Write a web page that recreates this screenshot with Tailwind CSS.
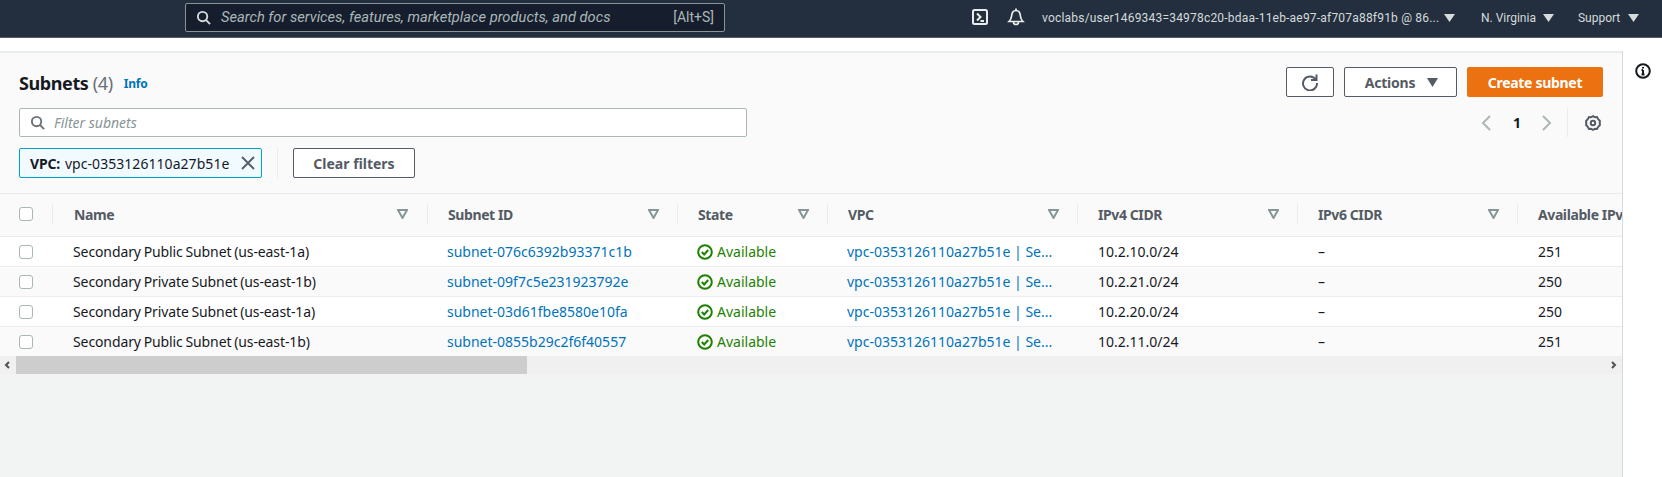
<!DOCTYPE html>
<html lang="en">
<head>
<meta charset="utf-8">
<title>Subnets</title>
<script src="https://cdn.jsdelivr.net/npm/@tailwindcss/browser@4"></script>
</head>
<body class="bg-white">
<div class="h-[477px] w-[1662px] overflow-hidden flex flex-col bg-white font-['Noto_Sans',sans-serif] text-[14px] text-[#16191f]">

	<!-- top nav -->
	<div class="h-[38px] shrink-0 bg-[#232f3e] border-b border-[#545b64] flex items-start font-['Roboto',sans-serif] text-[12px] text-[#d5dbdb]">
		<div class="ml-[185px] mt-[3px] w-[540px] h-[29px] bg-[#161e2d] border border-[#879596] rounded-[2px] flex items-center pl-[10px] pr-[10px]">
			<svg class="w-[15px] h-[15px] text-[#d5dbdb]" viewBox="0 0 16 16" fill="none" stroke="currentColor" stroke-width="2"><circle cx="7" cy="7" r="5"/><path d="M10.500 10.500 15 15"/></svg>
			<span class="ml-[10px] italic text-[14.7px] text-[#aab7b8]">Search for services, features, marketplace products, and docs</span>
			<span class="ml-auto text-[14px] text-[#aab7b8]">[Alt+S]</span>
		</div>
		<svg class="ml-[246px] mt-[8px] w-[18px] h-[18px] text-[#eaeded]" viewBox="0 0 18 18" fill="none" stroke="currentColor" stroke-width="2"><rect x="2" y="2" width="14" height="14" rx="1.500"/><path d="M6 5.500 9.500 9 6 12.500M9.500 13h3.500"/></svg>
		<svg class="ml-[18px] mt-[7px] w-[18px] h-[20px] text-[#eaeded]" viewBox="0 0 18 20" fill="none" stroke="currentColor" stroke-width="1.700"><path d="M2 14.500h14c-1.600-1.600-2.400-3-2.600-5.500C13.200 6 12 3.500 9 3.500S4.800 6 4.600 9C4.400 11.500 3.600 12.900 2 14.500Z"/><path d="M9 1.500v2M6.500 15a2.500 2.500 0 0 0 5 0"/></svg>
		<span class="ml-[17px] mt-[9px] w-[396px] whitespace-nowrap tracking-[0.2px]">voclabs/user1469343=34978c20-bdaa-11eb-ae97-af707a88f91b @ 86...</span>
		<svg class="ml-[6px] mt-[14px] w-[11px] h-[8px] text-[#d5dbdb]" viewBox="0 0 11 8" fill="currentColor"><path d="M0 0h11L5.500 8Z"/></svg>
		<span class="ml-[26px] mt-[9px] whitespace-nowrap">N. Virginia</span>
		<svg class="ml-[7px] mt-[14px] w-[11px] h-[8px] text-[#d5dbdb]" viewBox="0 0 11 8" fill="currentColor"><path d="M0 0h11L5.500 8Z"/></svg>
		<span class="ml-[24px] mt-[9px] whitespace-nowrap">Support</span>
		<svg class="ml-[8px] mt-[14px] w-[11px] h-[8px] text-[#d5dbdb]" viewBox="0 0 11 8" fill="currentColor"><path d="M0 0h11L5.500 8Z"/></svg>
	</div>

	<div class="h-[13px] shrink-0 bg-white"></div>

	<div class="flex-1 flex min-h-0">
		<!-- main panel -->
		<div class="w-[1623px] shrink-0 bg-[#f2f3f3] border-r border-[#d5dbdb] flex flex-col overflow-hidden">
			<div class="bg-[#fafafa] border-t-2 border-[#eaeded] shrink-0">
				<div class="h-[140px] pl-[19px] pr-[19px] pt-[14px] flex flex-col">
					<div class="flex items-center h-[30px]">
						<h1 class="text-[18px] font-bold leading-none mt-[2px] tracking-[-0.4px]">Subnets <span class="font-normal text-[#687078]">(4)</span></h1>
						<a class="ml-[11px] mt-[4px] text-[12px] font-bold text-[#0073bb] tracking-[-0.2px]">Info</a>
						<button class="ml-auto w-[48px] h-[30px] bg-white border border-[#545b64] rounded-[2px] flex items-center justify-center">
							<svg class="w-[18px] h-[18px] text-[#545b64]" viewBox="0 0 18 18" fill="none" stroke="currentColor" stroke-width="2"><path d="M14.800 6.500A7 7 0 1 0 16 10"/><path d="M15.500 1.500v5.500H10"/></svg>
						</button>
						<button class="ml-[10px] w-[113px] h-[30px] bg-white border border-[#545b64] rounded-[2px] flex items-center justify-center font-bold text-[#545b64]">
							<span class="ml-[2px] tracking-[-0.2px]">Actions</span>
							<svg class="ml-[12px] w-[11px] h-[9px]" viewBox="0 0 11 9" fill="currentColor"><path d="M0 0h11L5.500 9Z"/></svg>
						</button>
						<button class="ml-[10px] w-[136px] h-[30px] bg-[#ec7211] rounded-[2px] font-bold text-white tracking-[-0.3px]">Create subnet</button>
					</div>
					<div class="flex items-center mt-[11px] h-[29px]">
						<div class="w-[728px] h-[29px] bg-white border border-[#aab7b8] rounded-[2px] flex items-center pl-[10px]">
							<svg class="w-[15px] h-[15px] text-[#687078]" viewBox="0 0 16 16" fill="none" stroke="currentColor" stroke-width="2"><circle cx="7" cy="7" r="5"/><path d="M10.500 10.500 15 15"/></svg>
							<span class="ml-[9px] italic text-[#879596]">Filter subnets</span>
						</div>
						<svg class="ml-auto w-[10px] h-[16px] text-[#aab7b8]" viewBox="0 0 10 16" fill="none" stroke="currentColor" stroke-width="2"><path d="M9 1 2 8l7 7"/></svg>
						<span class="ml-[22px] font-bold">1</span>
						<svg class="ml-[21px] w-[10px] h-[16px] text-[#aab7b8]" viewBox="0 0 10 16" fill="none" stroke="currentColor" stroke-width="2"><path d="m1 1 7 7-7 7"/></svg>
						<div class="ml-[15px] h-[29px] border-l border-[#eaeded]"></div>
						<svg class="ml-[17px] mr-[2px] w-[16px] h-[16px] text-[#545b64]" viewBox="0 0 16 16" fill="none" stroke="currentColor" stroke-width="2"><path d="M8 1.200 10 2.300l2-.2 1.400 2.300 1.400 1.300v4.600L13.400 11.600 12 13.900l-2-.2L8 14.800l-2-1.100-2 .2-1.400-2.300L1.200 10.300V5.700l1.400-1.300L4 2.100l2 .2Z"/><circle cx="8" cy="8" r="2.200"/></svg>
					</div>
					<div class="flex items-center mt-[11px] h-[30px]">
						<div class="w-[243px] h-[30px] bg-[#f1faff] border border-[#00a1c9] rounded-[2px] flex items-center pl-[10px]">
							<span class="font-bold mr-[5px] tracking-[-0.2px]">VPC:</span><span class="whitespace-nowrap tracking-[0.05px]">vpc-0353126110a27b51e</span>
							<svg class="ml-[12px] w-[14px] h-[14px] text-[#545b64]" viewBox="0 0 14 14" fill="none" stroke="currentColor" stroke-width="1.800"><path d="m1 1 12 12M13 1 1 13"/></svg>
						</div>
						<div class="ml-[15px] h-[30px] border-l border-[#eaeded]"></div>
						<button class="ml-[15px] w-[122px] h-[30px] bg-white border border-[#545b64] rounded-[2px] font-bold text-[#545b64]">Clear filters</button>
					</div>
				</div>
			</div>

			<!-- table -->
			<div class="shrink-0 border-t border-[#eaeded] overflow-hidden">
				<div class="grid grid-cols-[53px_375px_250px_150px_250px_220px_220px_105px] h-[43px] pb-[2px] bg-[#fafafa] border-b border-[#eaeded] font-bold text-[#545b64] items-center tracking-[-0.4px]">
					<div class="h-[21px] border-r border-[#eaeded] pl-[19px] flex items-center"><span class="w-[14px] h-[14px] bg-white border border-[#aab7b8] rounded-[3px]"></span></div>
					<div class="h-[21px] border-r border-[#eaeded] pl-[21px] pr-[19px] flex items-center justify-between">Name<svg class="w-[11px] h-[10px] text-[#879596]" viewBox="0 0 11 10" fill="none" stroke="currentColor" stroke-width="2"><path d="M1 1h9L5.500 9Z"/></svg></div>
					<div class="h-[21px] border-r border-[#eaeded] pl-[20px] pr-[18px] flex items-center justify-between">Subnet ID<svg class="w-[11px] h-[10px] text-[#879596]" viewBox="0 0 11 10" fill="none" stroke="currentColor" stroke-width="2"><path d="M1 1h9L5.500 9Z"/></svg></div>
					<div class="h-[21px] border-r border-[#eaeded] pl-[20px] pr-[18px] flex items-center justify-between">State<svg class="w-[11px] h-[10px] text-[#879596]" viewBox="0 0 11 10" fill="none" stroke="currentColor" stroke-width="2"><path d="M1 1h9L5.500 9Z"/></svg></div>
					<div class="h-[21px] border-r border-[#eaeded] pl-[20px] pr-[18px] flex items-center justify-between">VPC<svg class="w-[11px] h-[10px] text-[#879596]" viewBox="0 0 11 10" fill="none" stroke="currentColor" stroke-width="2"><path d="M1 1h9L5.500 9Z"/></svg></div>
					<div class="h-[21px] border-r border-[#eaeded] pl-[20px] pr-[18px] flex items-center justify-between">IPv4 CIDR<svg class="w-[11px] h-[10px] text-[#879596]" viewBox="0 0 11 10" fill="none" stroke="currentColor" stroke-width="2"><path d="M1 1h9L5.500 9Z"/></svg></div>
					<div class="h-[21px] border-r border-[#eaeded] pl-[20px] pr-[18px] flex items-center justify-between">IPv6 CIDR<svg class="w-[11px] h-[10px] text-[#879596]" viewBox="0 0 11 10" fill="none" stroke="currentColor" stroke-width="2"><path d="M1 1h9L5.500 9Z"/></svg></div>
					<div class="pl-[20px] whitespace-nowrap overflow-hidden">Available IPv4 addresses</div>
				</div>

				<div class="grid grid-cols-[53px_375px_250px_150px_250px_220px_220px_105px] h-[30px] bg-white border-b border-[#eaeded] items-center">
					<div class="pl-[19px] flex"><span class="w-[14px] h-[14px] bg-white border border-[#aab7b8] rounded-[3px]"></span></div>
					<div class="pl-[20px] whitespace-nowrap tracking-[-0.1px] [word-spacing:-0.8px]">Secondary Public Subnet (us-east-1a)</div>
					<a class="pl-[19px] text-[#0073bb] whitespace-nowrap">subnet-076c6392b93371c1b</a>
					<div class="pl-[19px] flex items-center gap-[4px] text-[#1d8102]"><svg class="w-[16px] h-[16px]" viewBox="0 0 16 16" fill="none" stroke="currentColor" stroke-width="2"><circle cx="8" cy="8" r="6.800"/><path d="m4.800 8 2.400 2.500 4-4.500"/></svg>Available</div>
					<a class="pl-[19px] text-[#0073bb] whitespace-nowrap">vpc-0353126110a27b51e | Se...</a>
					<div class="pl-[20px]">10.2.10.0/24</div>
					<div class="pl-[20px]">–</div>
					<div class="pl-[20px]">251</div>
				</div>
				<div class="grid grid-cols-[53px_375px_250px_150px_250px_220px_220px_105px] h-[30px] bg-[#fafafa] border-b border-[#eaeded] items-center">
					<div class="pl-[19px] flex"><span class="w-[14px] h-[14px] bg-white border border-[#aab7b8] rounded-[3px]"></span></div>
					<div class="pl-[20px] whitespace-nowrap tracking-[-0.1px] [word-spacing:-0.8px]">Secondary Private Subnet (us-east-1b)</div>
					<a class="pl-[19px] text-[#0073bb] whitespace-nowrap">subnet-09f7c5e231923792e</a>
					<div class="pl-[19px] flex items-center gap-[4px] text-[#1d8102]"><svg class="w-[16px] h-[16px]" viewBox="0 0 16 16" fill="none" stroke="currentColor" stroke-width="2"><circle cx="8" cy="8" r="6.800"/><path d="m4.800 8 2.400 2.500 4-4.500"/></svg>Available</div>
					<a class="pl-[19px] text-[#0073bb] whitespace-nowrap">vpc-0353126110a27b51e | Se...</a>
					<div class="pl-[20px]">10.2.21.0/24</div>
					<div class="pl-[20px]">–</div>
					<div class="pl-[20px]">250</div>
				</div>
				<div class="grid grid-cols-[53px_375px_250px_150px_250px_220px_220px_105px] h-[30px] bg-white border-b border-[#eaeded] items-center">
					<div class="pl-[19px] flex"><span class="w-[14px] h-[14px] bg-white border border-[#aab7b8] rounded-[3px]"></span></div>
					<div class="pl-[20px] whitespace-nowrap tracking-[-0.1px] [word-spacing:-0.8px]">Secondary Private Subnet (us-east-1a)</div>
					<a class="pl-[19px] text-[#0073bb] whitespace-nowrap">subnet-03d61fbe8580e10fa</a>
					<div class="pl-[19px] flex items-center gap-[4px] text-[#1d8102]"><svg class="w-[16px] h-[16px]" viewBox="0 0 16 16" fill="none" stroke="currentColor" stroke-width="2"><circle cx="8" cy="8" r="6.800"/><path d="m4.800 8 2.400 2.500 4-4.500"/></svg>Available</div>
					<a class="pl-[19px] text-[#0073bb] whitespace-nowrap">vpc-0353126110a27b51e | Se...</a>
					<div class="pl-[20px]">10.2.20.0/24</div>
					<div class="pl-[20px]">–</div>
					<div class="pl-[20px]">250</div>
				</div>
				<div class="grid grid-cols-[53px_375px_250px_150px_250px_220px_220px_105px] h-[29px] bg-[#fafafa] items-center">
					<div class="pl-[19px] flex"><span class="w-[14px] h-[14px] bg-white border border-[#aab7b8] rounded-[3px]"></span></div>
					<div class="pl-[20px] whitespace-nowrap tracking-[-0.1px] [word-spacing:-0.8px]">Secondary Public Subnet (us-east-1b)</div>
					<a class="pl-[19px] text-[#0073bb] whitespace-nowrap">subnet-0855b29c2f6f40557</a>
					<div class="pl-[19px] flex items-center gap-[4px] text-[#1d8102]"><svg class="w-[16px] h-[16px]" viewBox="0 0 16 16" fill="none" stroke="currentColor" stroke-width="2"><circle cx="8" cy="8" r="6.800"/><path d="m4.800 8 2.400 2.500 4-4.500"/></svg>Available</div>
					<a class="pl-[19px] text-[#0073bb] whitespace-nowrap">vpc-0353126110a27b51e | Se...</a>
					<div class="pl-[20px]">10.2.11.0/24</div>
					<div class="pl-[20px]">–</div>
					<div class="pl-[20px]">251</div>
				</div>
			</div>

			<!-- horizontal scrollbar -->
			<div class="h-[18px] shrink-0 bg-[#f0f0f0] flex items-center text-[#505050]">
				<svg class="w-[16px] h-[18px]" viewBox="0 0 16 18" fill="none" stroke="currentColor" stroke-width="2"><path d="M9 6 6 9l3 3"/></svg>
				<div class="w-[511px] h-[18px] bg-[#cdcdcd]"></div>
				<svg class="ml-auto w-[16px] h-[18px]" viewBox="0 0 16 18" fill="none" stroke="currentColor" stroke-width="2"><path d="m6 6 3 3-3 3"/></svg>
			</div>
		</div>

		<!-- help rail -->
		<div class="flex-1 flex justify-center pt-[12px] bg-white">
			<svg class="w-[16px] h-[16px] text-[#16191f]" viewBox="0 0 16 16" fill="none" stroke="currentColor" stroke-width="2"><circle cx="8" cy="8" r="6.800"/><path d="M8 7v4.500M6.500 11.500h3M6.500 7H8M8 4v1.500"/></svg>
		</div>
	</div>
</div>
</body>
</html>
